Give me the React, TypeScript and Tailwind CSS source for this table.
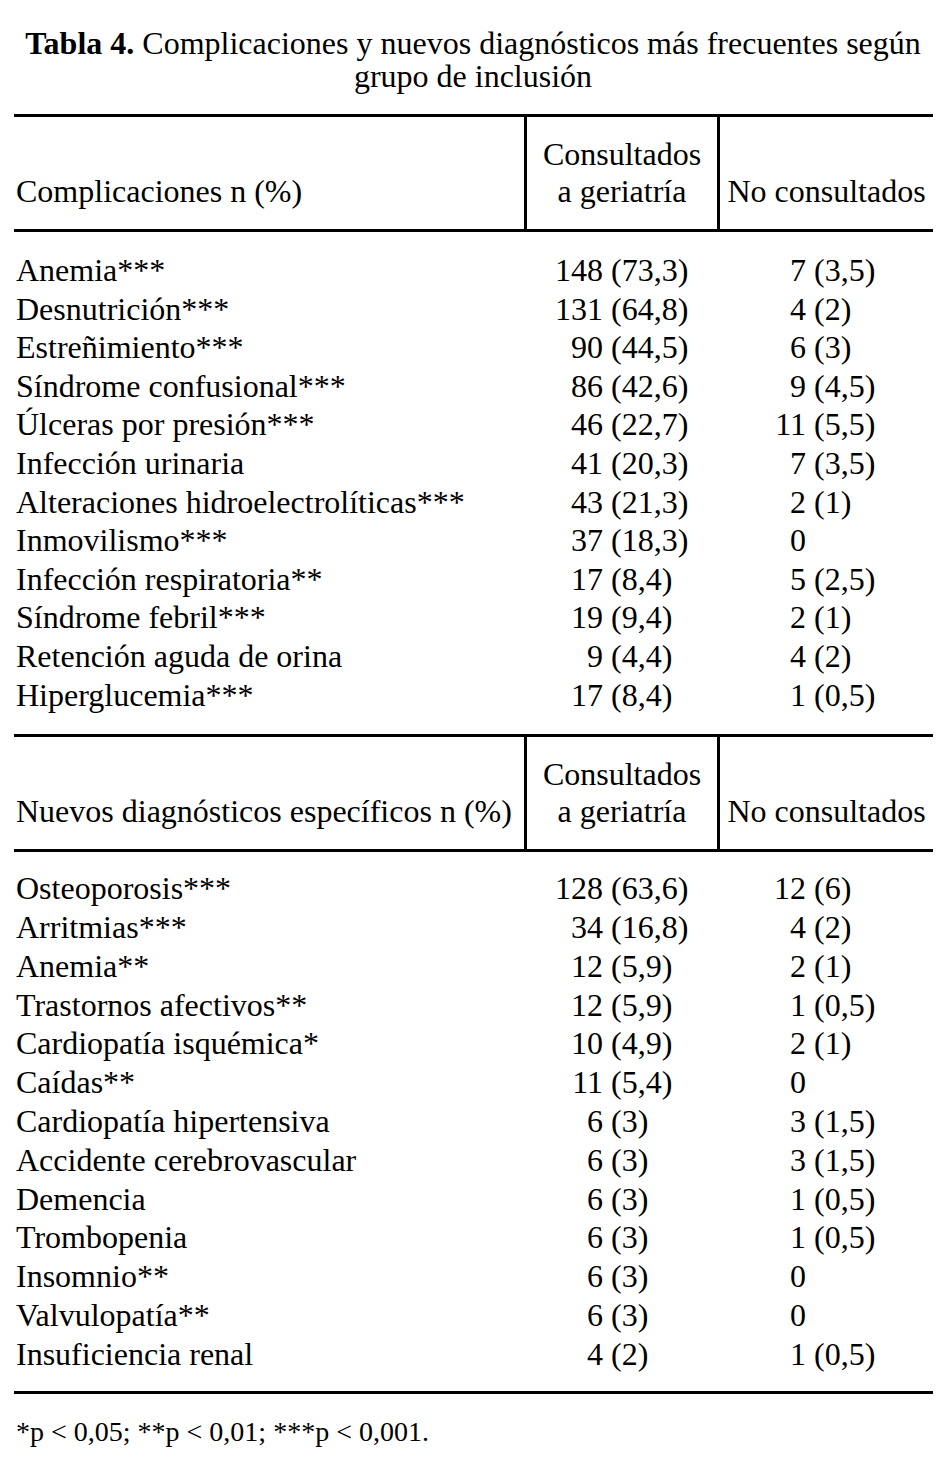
import React from 'react'

type Row = { label: string; a: [string, string?]; b: [string, string?] }

const complicaciones: Row[] = [
  { label: 'Anemia***', a: ['148', '(73,3)'], b: ['7', '(3,5)'] },
  { label: 'Desnutrición***', a: ['131', '(64,8)'], b: ['4', '(2)'] },
  { label: 'Estreñimiento***', a: ['90', '(44,5)'], b: ['6', '(3)'] },
  { label: 'Síndrome confusional***', a: ['86', '(42,6)'], b: ['9', '(4,5)'] },
  { label: 'Úlceras por presión***', a: ['46', '(22,7)'], b: ['11', '(5,5)'] },
  { label: 'Infección urinaria', a: ['41', '(20,3)'], b: ['7', '(3,5)'] },
  { label: 'Alteraciones hidroelectrolíticas***', a: ['43', '(21,3)'], b: ['2', '(1)'] },
  { label: 'Inmovilismo***', a: ['37', '(18,3)'], b: ['0'] },
  { label: 'Infección respiratoria**', a: ['17', '(8,4)'], b: ['5', '(2,5)'] },
  { label: 'Síndrome febril***', a: ['19', '(9,4)'], b: ['2', '(1)'] },
  { label: 'Retención aguda de orina', a: ['9', '(4,4)'], b: ['4', '(2)'] },
  { label: 'Hiperglucemia***', a: ['17', '(8,4)'], b: ['1', '(0,5)'] },
]

const diagnosticos: Row[] = [
  { label: 'Osteoporosis***', a: ['128', '(63,6)'], b: ['12', '(6)'] },
  { label: 'Arritmias***', a: ['34', '(16,8)'], b: ['4', '(2)'] },
  { label: 'Anemia**', a: ['12', '(5,9)'], b: ['2', '(1)'] },
  { label: 'Trastornos afectivos**', a: ['12', '(5,9)'], b: ['1', '(0,5)'] },
  { label: 'Cardiopatía isquémica*', a: ['10', '(4,9)'], b: ['2', '(1)'] },
  { label: 'Caídas**', a: ['11', '(5,4)'], b: ['0'] },
  { label: 'Cardiopatía hipertensiva', a: ['6', '(3)'], b: ['3', '(1,5)'] },
  { label: 'Accidente cerebrovascular', a: ['6', '(3)'], b: ['3', '(1,5)'] },
  { label: 'Demencia', a: ['6', '(3)'], b: ['1', '(0,5)'] },
  { label: 'Trombopenia', a: ['6', '(3)'], b: ['1', '(0,5)'] },
  { label: 'Insomnio**', a: ['6', '(3)'], b: ['0'] },
  { label: 'Valvulopatía**', a: ['6', '(3)'], b: ['0'] },
  { label: 'Insuficiencia renal', a: ['4', '(2)'], b: ['1', '(0,5)'] },
]

const Rule = () => <div className="h-[3px] bg-black" />

const Header = ({ title }: { title: string }) => (
  <div className="grid grid-cols-[510px_193px_216px] leading-[37px]">
    <div className="flex items-end pl-[2px] pt-[19px] pb-[19px] whitespace-nowrap">{title}</div>
    <div className="border-l-[3px] border-black pt-[19px] pb-[19px] text-center">
      <div>Consultados</div>
      <div>a geriatría</div>
    </div>
    <div className="flex items-end justify-center border-l-[3px] border-black pt-[19px] pb-[19px] whitespace-nowrap">
      No consultados
    </div>
  </div>
)

const Body = ({ rows, box }: { rows: Row[]; box: string }) => (
  <div className={box}>
    {rows.map((r, i) => (
      <div key={i} className="grid grid-cols-[510px_193px_216px] whitespace-pre">
        <div className="pl-[2px]">{r.label}</div>
        <div className="flex">
          <span className="w-[79px] text-right">{r.a[0]}</span>
          {r.a[1] && <span>{' ' + r.a[1]}</span>}
        </div>
        <div className="flex">
          <span className="w-[89px] text-right">{r.b[0]}</span>
          {r.b[1] && <span>{' ' + r.b[1]}</span>}
        </div>
      </div>
    ))}
  </div>
)

export default function App() {
  return (
    <div className="w-[946px] min-h-[1464px] bg-white text-black font-['Liberation_Serif','Times_New_Roman',serif]">
      <div className="pt-[27px] mb-[21px] text-center text-[32px] leading-[33px]">
        <div>
          <span className="font-bold">Tabla 4.</span> Complicaciones y nuevos diagnósticos más frecuentes según
        </div>
        <div>grupo de inclusión</div>
      </div>

      <div className="ml-[14px] w-[919px] text-[32px]">
        <Rule />
        <Header title="Complicaciones n (%)" />
        <Rule />
        <Body rows={complicaciones} box="pt-[19px] pb-[20px] leading-[38.6px]" />
        <Rule />
        <Header title="Nuevos diagnósticos específicos n (%)" />
        <Rule />
        <Body rows={diagnosticos} box="pt-[17px] pb-[18px] leading-[38.8px]" />
        <Rule />
        <p className="pt-[24px] pl-[2px] text-[28px] leading-[28px]">*p &lt; 0,05; **p &lt; 0,01; ***p &lt; 0,001.</p>
      </div>
    </div>
  )
}
